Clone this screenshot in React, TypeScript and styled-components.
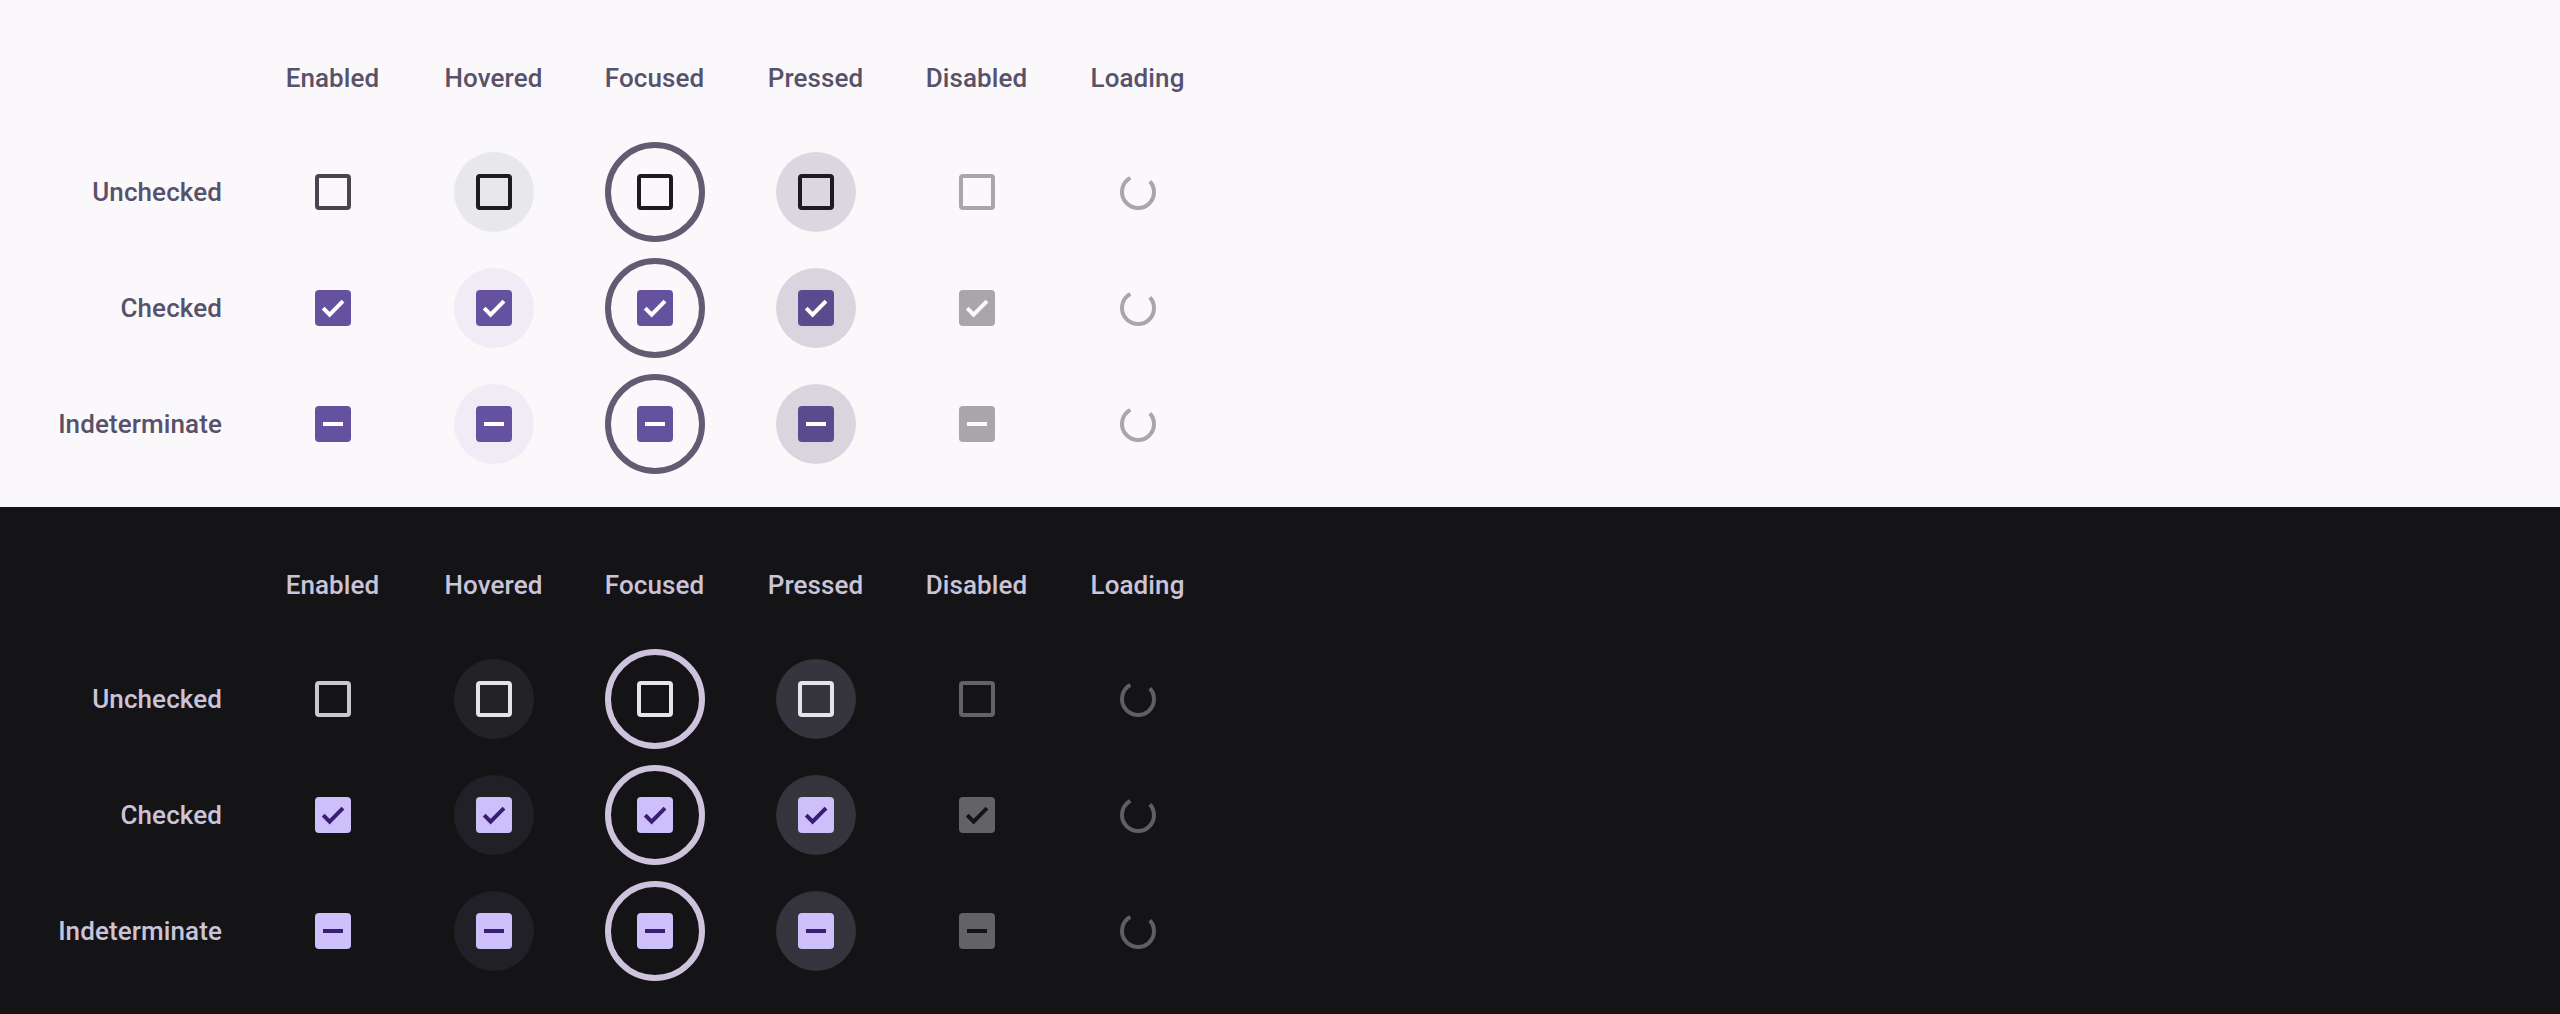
import React from "react";
import styled, { createGlobalStyle } from "styled-components";

type Palette = {
  bg: string;
  text: string;
  outline: string;
  outlineActive: string;
  fill: string;
  fillPressed: string;
  mark: string;
  disabled: string;
  disabledMark: string;
  hover: string;
  hoverChecked: string;
  pressed: string;
  pressedChecked: string;
  ring: string;
  spinner: string;
};

const light: Palette = {
  bg: "#fbf8fc",
  text: "#57526a",
  outline: "#49454f",
  outlineActive: "#1d1b20",
  fill: "#6452a0",
  fillPressed: "#594b8e",
  mark: "#ffffff",
  disabled: "#a8a6ab",
  disabledMark: "#fbf8fc",
  hover: "#e8e7ea",
  hoverChecked: "#efecf5",
  pressed: "#dad7e0",
  pressedChecked: "#d8d5de",
  ring: "#615c72",
  spinner: "#a8a6ab",
};

const dark: Palette = {
  bg: "#141417",
  text: "#cbc4d9",
  outline: "#cac7cf",
  outlineActive: "#e6e3ea",
  fill: "#cdbff9",
  fillPressed: "#cdbff9",
  mark: "#381e72",
  disabled: "#636266",
  disabledMark: "#141417",
  hover: "#232226",
  hoverChecked: "#222027",
  pressed: "#36343c",
  pressedChecked: "#35333b",
  ring: "#cdc3dc",
  spinner: "#606063",
};

type StateName = "Enabled" | "Hovered" | "Focused" | "Pressed" | "Disabled" | "Loading";
type Value = "Unchecked" | "Checked" | "Indeterminate";

const columns: StateName[] = ["Enabled", "Hovered", "Focused", "Pressed", "Disabled", "Loading"];
const rows: Value[] = ["Unchecked", "Checked", "Indeterminate"];

const GlobalStyle = createGlobalStyle`
  html, body {
    margin: 0;
    padding: 0;
    background: #141417;
  }
  body {
    font-family: Roboto, "Noto Sans", "Liberation Sans", sans-serif;
    overflow: hidden;
  }
`;

const Page = styled.div`
  display: flex;
  flex-direction: column;
  width: 2560px;
`;

const Panel = styled.section<{ $p: Palette }>`
  background: ${(p) => p.$p.bg};
  color: ${(p) => p.$p.text};
  height: 507px;
  box-sizing: border-box;
  padding-top: 22px;
`;

const Grid = styled.div`
  display: grid;
  grid-template-columns: 252px repeat(6, 161px);
  grid-template-rows: 112px repeat(3, 116px);
`;

const Label = styled.div`
  font-size: 26px;
  font-weight: 500;
  letter-spacing: 0.1px;
  line-height: 36px;
  align-self: center;
`;

const ColHead = styled(Label)`
  text-align: center;
`;

const RowLabel = styled(Label)`
  text-align: right;
  padding-right: 30px;
`;

const Cell = styled.div`
  display: flex;
  align-items: center;
  justify-content: center;
`;

const StateLayer = styled.div<{ $bg: string }>`
  width: 80px;
  height: 80px;
  border-radius: 50%;
  background: ${(p) => p.$bg};
  display: flex;
  align-items: center;
  justify-content: center;
`;

const FocusRing = styled.div<{ $color: string }>`
  width: 100px;
  height: 100px;
  box-sizing: border-box;
  border-radius: 50%;
  border: 6px solid ${(p) => p.$color};
  display: flex;
  align-items: center;
  justify-content: center;
`;

const Box = styled.div<{ $outline?: string; $fill?: string }>`
  width: 36px;
  height: 36px;
  box-sizing: border-box;
  border-radius: 4px;
  border: ${(p) => (p.$outline ? `4px solid ${p.$outline}` : "none")};
  background: ${(p) => p.$fill ?? "transparent"};
  display: flex;
  align-items: center;
  justify-content: center;
`;

const Dash = styled.span<{ $color: string }>`
  display: block;
  width: 20px;
  height: 4px;
  background: ${(p) => p.$color};
`;

const CheckMark = ({ color }: { color: string }) => (
  <svg width="36" height="36" viewBox="0 0 18 18" aria-hidden="true">
    <path d="M4.1 9.1 L7.3 12.3 L14 5.6" fill="none" stroke={color} strokeWidth="2" strokeLinecap="butt" strokeLinejoin="miter" />
  </svg>
);

const Spinner = ({ color }: { color: string }) => {
  const r = 16;
  const c = 2 * Math.PI * r;
  const arc = (282 / 360) * c;
  return (
    <svg width="40" height="40" viewBox="0 0 40 40" aria-hidden="true">
      <circle
        cx="20"
        cy="20"
        r={r}
        fill="none"
        stroke={color}
        strokeWidth="4"
        strokeDasharray={`${arc} ${c}`}
        transform="rotate(-42 20 20)"
      />
    </svg>
  );
};

function CheckboxGlyph({ value, state, p }: { value: Value; state: StateName; p: Palette }) {
  const disabled = state === "Disabled";
  if (value === "Unchecked") {
    const outline = disabled ? p.disabled : state === "Enabled" ? p.outline : p.outlineActive;
    return <Box $outline={outline} />;
  }
  const fill = disabled ? p.disabled : state === "Pressed" ? p.fillPressed : p.fill;
  const mark = disabled ? p.disabledMark : p.mark;
  return (
    <Box $fill={fill}>
      {value === "Checked" ? <CheckMark color={mark} /> : <Dash $color={mark} />}
    </Box>
  );
}

function StateCell({ value, state, p }: { value: Value; state: StateName; p: Palette }) {
  if (state === "Loading") {
    return (
      <Cell>
        <Spinner color={p.spinner} />
      </Cell>
    );
  }
  const glyph = <CheckboxGlyph value={value} state={state} p={p} />;
  const checked = value !== "Unchecked";
  if (state === "Hovered") {
    return (
      <Cell>
        <StateLayer $bg={checked ? p.hoverChecked : p.hover}>{glyph}</StateLayer>
      </Cell>
    );
  }
  if (state === "Pressed") {
    return (
      <Cell>
        <StateLayer $bg={checked ? p.pressedChecked : p.pressed}>{glyph}</StateLayer>
      </Cell>
    );
  }
  if (state === "Focused") {
    return (
      <Cell>
        <FocusRing $color={p.ring}>{glyph}</FocusRing>
      </Cell>
    );
  }
  return <Cell>{glyph}</Cell>;
}

function Showcase({ p }: { p: Palette }) {
  return (
    <Panel $p={p}>
      <Grid>
        <div />
        {columns.map((c) => (
          <ColHead key={c}>{c}</ColHead>
        ))}
        {rows.map((r) => (
          <React.Fragment key={r}>
            <RowLabel>{r}</RowLabel>
            {columns.map((c) => (
              <StateCell key={c} value={r} state={c} p={p} />
            ))}
          </React.Fragment>
        ))}
      </Grid>
    </Panel>
  );
}

export default function App() {
  return (
    <>
      <GlobalStyle />
      <Page>
        <Showcase p={light} />
        <Showcase p={dark} />
      </Page>
    </>
  );
}
